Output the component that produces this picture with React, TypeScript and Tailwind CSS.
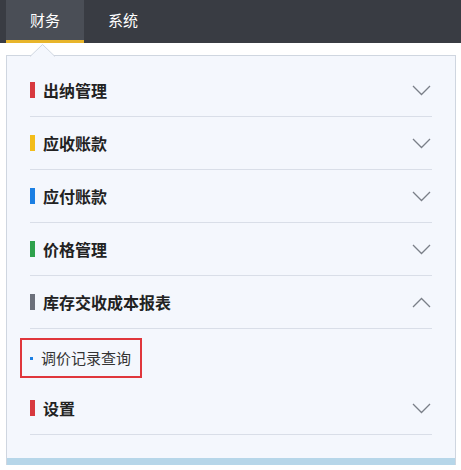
const groups = [
  { title: '出纳管理', color: 'bg-[#d8393f]', open: false },
  { title: '应收账款', color: 'bg-[#f3bd1a]', open: false },
  { title: '应付账款', color: 'bg-[#1b7fe3]', open: false },
  { title: '价格管理', color: 'bg-[#2ea14c]', open: false },
  { title: '库存交收成本报表', color: 'bg-[#6c707b]', open: true },
  { title: '设置', color: 'bg-[#d8393f]', open: false },
]

function Chevron({ up }: { up: boolean }) {
  return (
    <svg width="19" height="11" viewBox="0 0 19 11" className="mr-[1px]">
      <path
        d={up ? 'M1 10 L9.5 1.5 L18 10' : 'M1 1 L9.5 9.5 L18 1'}
        fill="none"
        stroke="#7a7f88"
        strokeWidth="1.3"
      />
    </svg>
  )
}

function GroupRow({ title, color, open }: { title: string; color: string; open: boolean }) {
  return (
    <div className="h-[53px] flex items-center border-b border-[#d9dee8]">
      <span className={`w-[5px] h-[16px] ${color}`} />
      <span className="ml-[8px] flex-1 text-[16px] font-bold text-[#222]">{title}</span>
      <Chevron up={open} />
    </div>
  )
}

export default function App() {
  return (
    <div
      className="relative w-[461px] h-[470px] bg-white overflow-hidden"
      style={{ fontFamily: '"Noto Sans CJK SC", "Noto Sans", sans-serif' }}
    >
      {/* top nav */}
      <div className="h-[43px] bg-[#393c43] flex pl-[6px]">
        <div className="w-[78px] bg-[#4a4e56] border-b-[3px] border-[#e8b52a] flex items-center justify-center text-[15px] text-white">
          财务
        </div>
        <div className="w-[78px] flex items-center justify-center text-[15px] text-white pb-[3px]">
          系统
        </div>
      </div>

      {/* caret */}
      <svg className="absolute left-[30px] top-[44px]" width="26" height="13" viewBox="0 0 26 13">
        <path d="M0 12.5 L12.5 0.5 L25 12.5" fill="#f4f7fd" stroke="#cfd6e0" strokeWidth="1" />
      </svg>

      {/* dropdown panel */}
      <div className="ml-[6px] mt-[12px] w-[450px] border border-[#cfd6e0] border-b-0 bg-[#f4f7fd]">
        <div className="pt-[8px] pl-[23px] pr-[23px] pb-[23px]">
          {groups.slice(0, 5).map(g => (
            <GroupRow key={g.title} {...g} />
          ))}
          <div className="h-[53px] flex items-start">
            <div className="-ml-[10px] mt-[9px] w-[122px] h-[40px] border-2 border-[#e0363c] flex items-center pl-[8px]">
              <span className="w-[3px] h-[3px] bg-[#1b7fe3]" />
              <span className="ml-[8px] text-[15px] text-[#333]">调价记录查询</span>
            </div>
          </div>
          <GroupRow {...groups[5]} />
        </div>
        <div className="h-[7px] bg-[#b6d6e9]" />
      </div>
    </div>
  )
}
